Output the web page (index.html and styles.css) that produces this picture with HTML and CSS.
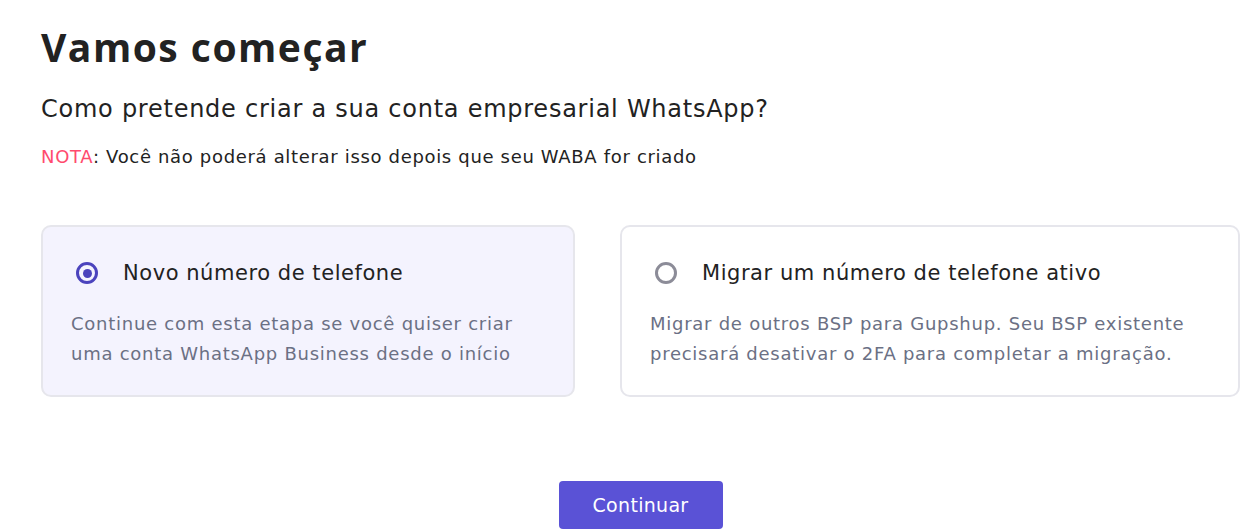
FILE: index.html
```html
<!DOCTYPE html>
<html lang="pt">
<head>
    <meta charset="UTF-8">
    <meta name="viewport" content="width=device-width, initial-scale=1.0">
    <title>Vamos começar</title>
    <link rel="stylesheet" href="styles.css">
</head>
<body>
    <div class="page">
        <h1 class="title">Vamos começar</h1>
        <h2 class="subtitle">Como pretende criar a sua conta empresarial WhatsApp?</h2>
        <p class="note"><span class="note-label">NOTA</span>: Você não poderá alterar isso depois que seu WABA for criado</p>

        <div class="options">
            <label class="option option-selected">
                <div class="option-head">
                    <span class="radio radio-on"></span>
                    <span class="option-title">Novo número de telefone</span>
                </div>
                <p class="option-desc">Continue com esta etapa se você quiser criar<br>uma conta WhatsApp Business desde o início</p>
            </label>

            <label class="option">
                <div class="option-head">
                    <span class="radio"></span>
                    <span class="option-title">Migrar um número de telefone ativo</span>
                </div>
                <p class="option-desc">Migrar de outros BSP para Gupshup. Seu BSP existente<br>precisará desativar o 2FA para completar a migração.</p>
            </label>
        </div>

        <div class="actions">
            <button class="btn-primary">Continuar</button>
        </div>
    </div>
</body>
</html>
```

FILE: styles.css
```css
* {
    margin: 0;
    padding: 0;
    box-sizing: border-box;
}

body {
    font-family: 'DejaVu Sans', 'Noto Sans', sans-serif;
    background: white;
    color: #222;
}

.page {
    padding: 20px 7px 0 41px;
}

.title {
    font-family: 'Open Sans', sans-serif;
    font-size: 39px;
    font-weight: 700;
    letter-spacing: 1.5px;
    line-height: 54px;
    color: #222;
}

.subtitle {
    font-size: 24px;
    font-weight: 400;
    letter-spacing: 0.75px;
    line-height: 32px;
    margin-top: 19px;
    color: #222;
}

.note {
    font-size: 18px;
    letter-spacing: 0.67px;
    line-height: 24px;
    margin-top: 20px;
    color: #222;
}

.note-label {
    color: #ff4b6e;
}

.options {
    display: grid;
    grid-template-columns: 534px 620px;
    gap: 45px;
    margin-top: 56px;
}

.option {
    display: block;
    border: 2px solid #e6e6ec;
    border-radius: 10px;
    padding: 31px 28px 26px 28px;
    background: white;
    cursor: pointer;
}

.option-selected {
    background: #f4f3fe;
}

.option-head {
    display: flex;
    align-items: center;
    gap: 25px;
    padding-left: 5px;
    height: 30px;
}

.radio {
    width: 22px;
    height: 22px;
    border-radius: 50%;
    border: 3px solid #8c8c98;
    flex-shrink: 0;
    position: relative;
}

.radio-on {
    border-color: #4b43bd;
}

.radio-on::after {
    content: '';
    position: absolute;
    left: 3.5px;
    top: 3.5px;
    width: 9px;
    height: 9px;
    border-radius: 50%;
    background: #4b43bd;
}

.option-title {
    font-size: 21px;
    letter-spacing: 0.55px;
    color: #222;
}

.option-desc {
    margin-top: 21px;
    font-size: 18px;
    letter-spacing: 0.74px;
    line-height: 30px;
    color: #6b7084;
}

.actions {
    display: flex;
    justify-content: center;
    margin-top: 84px;
}

.btn-primary {
    width: 164px;
    height: 48px;
    background: #5a52d6;
    color: white;
    border: none;
    border-radius: 4px;
    font-family: inherit;
    font-size: 19px;
    letter-spacing: 0.3px;
    cursor: pointer;
}
```
